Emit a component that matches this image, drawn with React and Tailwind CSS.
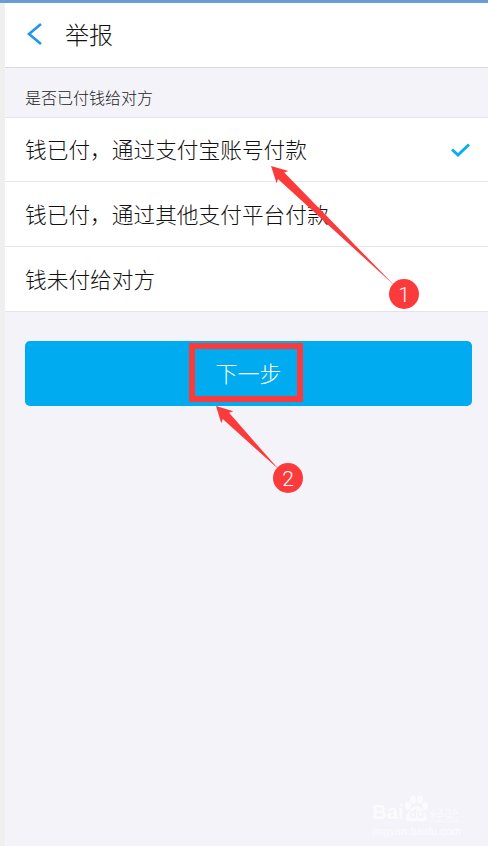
const FONT = "font-['Noto_Sans_CJK_SC','Noto_Sans',sans-serif]";

const options = [
  { label: "钱已付，通过支付宝账号付款", checked: true, height: "h-[63px]" },
  { label: "钱已付，通过其他支付平台付款", height: "h-[65px]" },
  { label: "钱未付给对方", height: "h-[65px]" },
];

function Marker({ tipX, tipY, cx, cy, n }) {
  // arrow shape: narrow tail at the circle, wide head at the tip
  const dx = cx - tipX;
  const dy = cy - tipY;
  const len = Math.hypot(dx, dy);
  const ux = dx / len;
  const uy = dy / len;
  const px = -uy;
  const py = ux;
  const at = (along, side) => `${tipX + ux * along + px * side},${tipY + uy * along + py * side}`;
  const points = [at(0, 0), at(16, 8.5), at(14, 4.5), at(len - 12, 0.5), at(14, -4.5), at(16, -8.5)].join(" ");
  return (
    <>
      <polygon points={points} fill="#fb3a3c" />
      <circle cx={cx} cy={cy} r="15" fill="#fb3a3c" />
      <text x={cx} y={cy + 7.5} textAnchor="middle" fontSize="21" fill="#fff" fontFamily="Roboto, sans-serif">
        {n}
      </text>
    </>
  );
}

function Watermark() {
  return (
    <div className="absolute bottom-[9px] right-[27px] flex flex-col gap-[3px] font-['Liberation_Sans',sans-serif] leading-none text-[#fbfbfd]">
      <div className="flex items-end">
        <span className="pb-[1px] text-[20px] font-bold">Bai</span>
        <div className="relative">
          <svg width="26" height="28" viewBox="0 0 26 28" className="block" fill="#fbfbfd">
            <ellipse cx="5" cy="11" rx="3" ry="4" />
            <ellipse cx="10" cy="4.5" rx="3" ry="4" />
            <ellipse cx="17" cy="4.5" rx="3" ry="4" />
            <ellipse cx="22" cy="11" rx="3" ry="4" />
            <path d="M13.5 11 C9 11 3 19 3 23 C3 27 8 27 13.5 26 C19 27 24 27 24 23 C24 19 18 11 13.5 11 Z" />
          </svg>
          <span className="absolute bottom-[3px] left-[6px] text-[12px] font-bold text-[#f3f3f9]">du</span>
        </div>
        <span className={`whitespace-nowrap pb-[1px] text-[15px] ${FONT}`}>经验</span>
      </div>
      <span className="whitespace-nowrap text-[11px]">jingyan.baidu.com</span>
    </div>
  );
}

export default function App() {
  return (
    <div className={`relative h-[846px] w-[488px] overflow-hidden bg-[#f3f3f9] font-light ${FONT}`}>
      <div className="flex h-full">
        <div className="w-[5px] shrink-0 bg-[#efefef]" />
        <div className="min-w-0 flex-1">
          <div className="flex h-[68px] items-center border-b border-[#d9d9e0] bg-white">
            <svg width="16" height="22" viewBox="0 0 16 22" className="ml-[22px]">
              <path d="M14 1 L2 11 L14 21" fill="none" stroke="#1e96f0" strokeWidth="2.6" />
            </svg>
            <span className="ml-[22px] text-[24px] leading-none text-[#111]">举报</span>
          </div>

          <div className="flex h-[49px] items-center pl-5 pt-[8px] text-[16px] text-[#1a1a1a]">是否已付钱给对方</div>

          <div className="border-y border-[#e4e4ea] bg-white">
            {options.map((o, i) => (
              <div
                key={o.label}
                className={`flex items-center justify-between pl-5 pr-[18px] text-[21.7px] text-[#111] ${o.height} ${i > 0 ? "border-t border-[#e6e6ea]" : ""}`}
              >
                <span className="whitespace-nowrap">{o.label}</span>
                {o.checked && (
                  <svg width="19" height="14" viewBox="0 0 19 14">
                    <path d="M1 6.5 L7 12 L18 1.5" fill="none" stroke="#09aef0" strokeWidth="3" />
                  </svg>
                )}
              </div>
            ))}
          </div>

          <div className="pl-5 pr-4 pt-[29px]">
            <button className="flex h-[65px] w-full items-center justify-center rounded-[5px] bg-[#00abf0] pb-[3px] text-[22px] font-light text-white">
              下一步
            </button>
          </div>
        </div>
      </div>

      {/* red annotations drawn over the screenshot */}
      <div className="absolute left-[189px] top-[343px] h-[59px] w-[114px] border-[6px] border-[#fb3a3c]" />
      <svg width="488" height="846" className="pointer-events-none absolute left-0 top-0">
        <Marker tipX={271} tipY={166} cx={404} cy={294} n="1" />
        <Marker tipX={216} tipY={406} cx={288} cy={478} n="2" />
      </svg>

      <Watermark />

      <div className="absolute left-0 top-0 h-[3px] w-full bg-[#6b9cd4]" />
    </div>
  );
}
